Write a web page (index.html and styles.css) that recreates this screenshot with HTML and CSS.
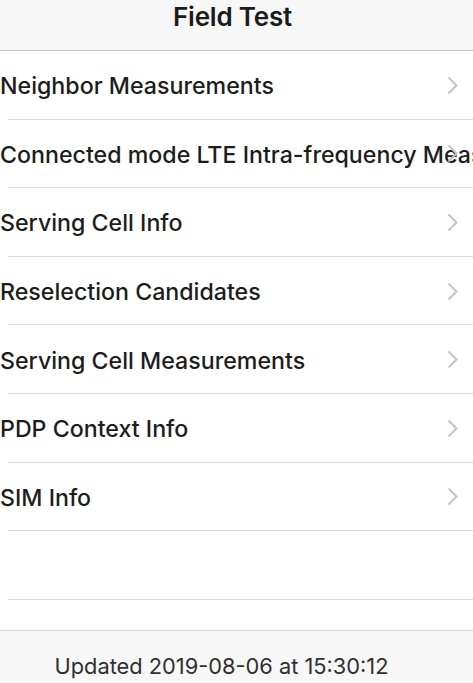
FILE: index.html
```html
<!DOCTYPE html>
<html lang="en">
<head>
<meta charset="utf-8">
<title>Field Test</title>
<link rel="stylesheet" href="styles.css">
</head>
<body>
<div class="screen">
  <header class="navbar"><h1 class="title">Field Test</h1></header>
  <ul class="list">
    <li class="row"><span class="label">Neighbor Measurements</span><svg class="chev" viewBox="0 0 11 19"><path d="M1.5 1.5 L9.5 9.5 L1.5 17.5"/></svg></li>
    <li class="row"><span class="label">Connected mode LTE Intra-frequency Measurements</span><svg class="chev" viewBox="0 0 11 19"><path d="M1.5 1.5 L9.5 9.5 L1.5 17.5"/></svg></li>
    <li class="row"><span class="label">Serving Cell Info</span><svg class="chev" viewBox="0 0 11 19"><path d="M1.5 1.5 L9.5 9.5 L1.5 17.5"/></svg></li>
    <li class="row"><span class="label">Reselection Candidates</span><svg class="chev" viewBox="0 0 11 19"><path d="M1.5 1.5 L9.5 9.5 L1.5 17.5"/></svg></li>
    <li class="row"><span class="label">Serving Cell Measurements</span><svg class="chev" viewBox="0 0 11 19"><path d="M1.5 1.5 L9.5 9.5 L1.5 17.5"/></svg></li>
    <li class="row"><span class="label">PDP Context Info</span><svg class="chev" viewBox="0 0 11 19"><path d="M1.5 1.5 L9.5 9.5 L1.5 17.5"/></svg></li>
    <li class="row"><span class="label">SIM Info</span><svg class="chev" viewBox="0 0 11 19"><path d="M1.5 1.5 L9.5 9.5 L1.5 17.5"/></svg></li>
    <li class="row empty"></li>
  </ul>
  <div class="spacer"></div>
  <footer class="toolbar"><span class="updated">Updated 2019-08-06 at 15:30:12</span></footer>
</div>
</body>
</html>
```
FILE: styles.css
```css
* { box-sizing: border-box; }
html, body { margin: 0; padding: 0; background: #ffffff; }
body { font-family: Inter, "Noto Sans", "Liberation Sans", sans-serif; color: #1d1d1d; }
.screen { width: 473px; height: 683px; display: flex; flex-direction: column; overflow: hidden; background: #fff; }
.navbar { height: 51px; flex: none; background: #f7f7f7; border-bottom: 1px solid #c9c9c9; display: flex; justify-content: center; align-items: flex-start; padding-top: 1px; }
.title { margin: 0; font-size: 26px; font-weight: 600; line-height: 32px; color: #1b1b1b; letter-spacing: -0.2px; padding-right: 8px; }
.list { list-style: none; margin: 0; padding: 0; flex: none; }
.row { height: 68.6px; display: flex; align-items: center; position: relative; padding-right: 15px; }
.row::after { content: ""; position: absolute; left: 8px; right: 0; bottom: 0; height: 1px; background: #d9d9d9; }
.label { flex: 1 1 auto; min-width: 0; white-space: nowrap; font-size: 23.2px; font-weight: 500; line-height: 28px; padding-top: 2px; }
.chev { flex: none; width: 11px; height: 19px; fill: none; stroke: #c4c4c8; stroke-width: 2; position: relative; }
.spacer { flex: 1 1 auto; }
.toolbar { height: 53px; flex: none; background: #f7f7f7; border-top: 1px solid #d4d4d4; display: flex; justify-content: center; align-items: flex-end; padding-bottom: 4px; }
.updated { font-size: 21.8px; line-height: 26px; color: #303030; padding-right: 30px; }
```
